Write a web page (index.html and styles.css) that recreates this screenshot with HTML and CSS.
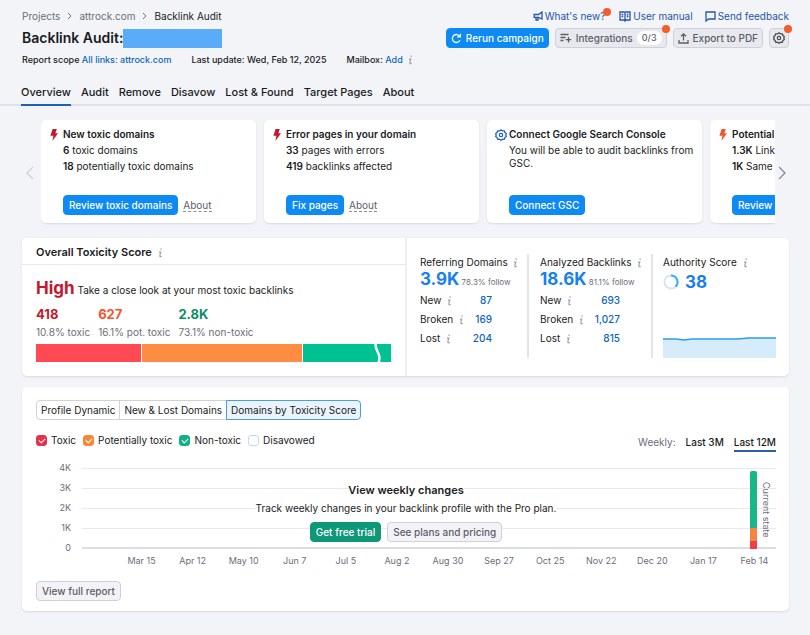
FILE: index.html
```html
<!DOCTYPE html>
<html lang="en">
<head>
	<meta charset="utf-8">
	<title>Backlink Audit</title>
	<meta name="viewport" content="width=device-width, initial-scale=1">
	<link rel="stylesheet" href="styles.css">
</head>
<body>
	<!-- shared icons -->
	<svg class="sprite" aria-hidden="true">
		<symbol id="info" viewBox="0 0 5 10"><path d="M2.400 1.200h1.400M1 4.200h1.800L2 6.500v2.200h1.700" fill="none" stroke="currentColor" stroke-width="1.200"/></symbol>
		<symbol id="bolt" viewBox="0 0 8 12"><path d="M2.6 0h4.2L5.4 4.2H8L2.4 12l1-5.2H.4z" fill="currentColor"/></symbol>
		<symbol id="gear" viewBox="0 0 12 12"><path d="M6 .8l1.5 1.1 1.8-.1.6 1.7 1.4 1.1L10.800 6l.5 1.500-1.400 1.100-.6 1.700-1.800-.1L6 11.300l-1.500-1.100-1.800.1-.6-1.700L.7 7.500 1.200 6 .7 4.600l1.400-1.100.6-1.700 1.800.1z" fill="none" stroke="currentColor" stroke-width="1.300" stroke-linejoin="round"/><circle cx="6" cy="6" r="1.700" fill="none" stroke="currentColor" stroke-width="1.200"/></symbol>
	</svg>

	<header class="header">
		<div class="row">
			<nav class="crumbs">
				<a href="#">Projects</a>
				<svg width="5" height="8" viewBox="0 0 5 8"><path d="M1 1l3 3-3 3"/></svg>
				<a href="#">attrock.com</a>
				<svg width="5" height="8" viewBox="0 0 5 8"><path d="M1 1l3 3-3 3"/></svg>
				<span>Backlink Audit</span>
			</nav>
			<div class="help">
				<a href="#">
					<svg width="10" height="10" viewBox="0 0 10 10"><path d="M9 1v7L5.500 6.300H1.200V3.500h4.300zM3 6.500V9h2V6.500"/></svg>What's new?<i class="dot"></i>
				</a>
				<a href="#">
					<svg width="12" height="11" viewBox="0 0 12 11"><path d="M1 1h4l1 .6L7 1h4v8H7l-1 1-1-1H1zM6 1.500V10M2.600 3.500h1.600M2.600 5.500h1.600M7.800 3.500h1.600M7.800 5.500h1.600"/></svg>User manual
				</a>
				<a href="#">
					<svg width="11" height="11" viewBox="0 0 11 11"><path d="M1 1h9v7H3.500L1 10z"/></svg>Send feedback
				</a>
			</div>
		</div>
		<div class="row title-row">
			<h1>Backlink Audit: <span class="masked"></span></h1>
			<div class="actions">
				<button class="btn primary">
					<svg width="11" height="11" viewBox="0 0 11 11"><path d="M9 7.200A4 4 0 1 1 8.800 3.400M9.400.8v3H6.300"/></svg>Rerun campaign
				</button>
				<button class="btn">
					<svg width="12" height="10" viewBox="0 0 12 10"><path d="M.5 1.500h8M.5 4.500h5M.5 7.500h3M8.500 4v5.500M5.800 6.700h5.400"/></svg>Integrations <span class="count">0/3</span><i class="dot"></i>
				</button>
				<button class="btn">
					<svg width="11" height="11" viewBox="0 0 11 11"><path d="M5.500 7.500V1M3 3.300L5.500.9 8 3.300M1 7v3h9V7"/></svg>Export to PDF
				</button>
				<button class="btn square" aria-label="Settings"><svg class="gear" width="12" height="12"><use href="#gear"/></svg><i class="dot"></i></button>
			</div>
		</div>
		<div class="meta">
			<span>Report scope <a href="#">All links: attrock.com</a></span>
			<span>Last update: Wed, Feb 12, 2025</span>
			<span>Mailbox: <a href="#">Add</a> <svg class="info"><use href="#info"/></svg></span>
		</div>
		<nav class="tabs">
			<a href="#" class="active">Overview</a>
			<a href="#">Audit</a>
			<a href="#">Remove</a>
			<a href="#">Disavow</a>
			<a href="#">Lost &amp; Found</a>
			<a href="#">Target Pages</a>
			<a href="#">About</a>
		</nav>
	</header>

	<main>
		<section class="carousel">
			<button class="arrow off" aria-label="Previous"><svg width="8" height="14" viewBox="0 0 8 14"><path d="M7 1L1 7l6 6"/></svg></button>
			<div class="cards">
				<article class="card">
					<svg class="mark red" width="8" height="12"><use href="#bolt"/></svg>
					<h2>New toxic domains</h2>
					<p><b>6</b> toxic domains</p>
					<p><b>18</b> potentially toxic domains</p>
					<div class="foot"><button class="btn primary">Review toxic domains</button><a href="#">About</a></div>
				</article>
				<article class="card">
					<svg class="mark red" width="8" height="12"><use href="#bolt"/></svg>
					<h2>Error pages in your domain</h2>
					<p><b>33</b> pages with errors</p>
					<p><b>419</b> backlinks affected</p>
					<div class="foot"><button class="btn primary">Fix pages</button><a href="#">About</a></div>
				</article>
				<article class="card">
					<svg class="mark blue" width="12" height="12"><use href="#gear"/></svg>
					<h2>Connect Google Search Console</h2>
					<p class="long">You will be able to audit backlinks from GSC.</p>
					<div class="foot"><button class="btn primary">Connect GSC</button></div>
				</article>
				<article class="card">
					<svg class="mark orange" width="8" height="12"><use href="#bolt"/></svg>
					<h2>Potential</h2>
					<p><b>1.3K</b> Link</p>
					<p><b>1K</b> Same</p>
					<div class="foot"><button class="btn primary">Review</button></div>
				</article>
			</div>
			<button class="arrow" aria-label="Next"><svg width="8" height="14" viewBox="0 0 8 14"><path d="M1 1l6 6-6 6"/></svg></button>
		</section>

		<section class="panel summary">
			<div class="toxicity">
				<h2>Overall Toxicity Score <svg class="info"><use href="#info"/></svg></h2>
				<div class="score">
					<p class="level"><strong>High</strong> Take a close look at your most toxic backlinks</p>
					<ul class="parts">
						<li><b class="red">418</b>10.8% toxic</li>
						<li><b class="orange">627</b>16.1% pot. toxic</li>
						<li><b class="green">2.8K</b>73.1% non-toxic</li>
					</ul>
					<div class="meter">
						<span class="m-toxic"></span><span class="m-pot"></span><span class="m-non"></span>
						<svg class="break" width="10" height="22" viewBox="0 0 10 22"><path d="M3 0C0 8 10 11 5 22" fill="none" stroke="#fff" stroke-width="2.500"/></svg>
					</div>
				</div>
			</div>
			<div class="stats">
				<div class="stat">
					<h3>Referring Domains <svg class="info"><use href="#info"/></svg></h3>
					<p><strong>3.9K</strong> 78.3% follow</p>
					<table>
						<tr><th>New <svg class="info"><use href="#info"/></svg></th><td><a href="#">87</a></td></tr>
						<tr><th>Broken <svg class="info"><use href="#info"/></svg></th><td><a href="#">169</a></td></tr>
						<tr><th>Lost <svg class="info"><use href="#info"/></svg></th><td><a href="#">204</a></td></tr>
					</table>
				</div>
				<div class="stat wide">
					<h3>Analyzed Backlinks <svg class="info"><use href="#info"/></svg></h3>
					<p><strong>18.6K</strong> 81.1% follow</p>
					<table>
						<tr><th>New <svg class="info"><use href="#info"/></svg></th><td><a href="#">693</a></td></tr>
						<tr><th>Broken <svg class="info"><use href="#info"/></svg></th><td><a href="#">1,027</a></td></tr>
						<tr><th>Lost <svg class="info"><use href="#info"/></svg></th><td><a href="#">815</a></td></tr>
					</table>
				</div>
				<div class="stat authority">
					<h3>Authority Score <svg class="info"><use href="#info"/></svg></h3>
					<p class="ring"><svg width="16" height="16" viewBox="0 0 16 16"><circle cx="8" cy="8" r="6.500" fill="none" stroke="#e0e1e9" stroke-width="2"/><path d="M8 1.500a6.500 6.500 0 0 1 4.500 11.200" fill="none" stroke="#2bb3ff" stroke-width="2"/></svg><strong>38</strong></p>
					<svg class="trend" viewBox="0 0 113 22" preserveAspectRatio="none"><path d="M0 3h13l8 1 8-1h45l8-1h31v20H0z" fill="#d6ecfb"/><path d="M0 3h13l8 1 8-1h45l12-1h27" fill="none" stroke="#2b9fe8" stroke-width="1.500"/></svg>
				</div>
			</div>
		</section>

		<section class="panel report">
			<div class="switch">
				<button>Profile Dynamic</button>
				<button>New &amp; Lost Domains</button>
				<button class="on">Domains by Toxicity Score</button>
			</div>
			<div class="filters">
				<label><input type="checkbox" class="c-red" checked>Toxic</label>
				<label><input type="checkbox" class="c-orange" checked>Potentially toxic</label>
				<label><input type="checkbox" class="c-green" checked>Non-toxic</label>
				<label><input type="checkbox">Disavowed</label>
				<div class="period">
					<span>Weekly:</span>
					<a href="#">Last 3M</a>
					<a href="#" class="active">Last 12M</a>
				</div>
			</div>
			<div class="chart">
				<div class="line"><span>4K</span></div>
				<div class="line"><span>3K</span></div>
				<div class="line"><span>2K</span></div>
				<div class="line"><span>1K</span></div>
				<div class="line base"><span>0</span></div>
				<div class="bar"><i class="b-non"></i><i class="b-pot"></i><i class="b-toxic"></i></div>
				<span class="current">Current state</span>
				<div class="promo">
					<h2>View weekly changes</h2>
					<p>Track weekly changes in your backlink profile with the Pro plan.</p>
					<div><button class="btn success">Get free trial</button><button class="btn light">See plans and pricing</button></div>
				</div>
			</div>
			<div class="dates">
				<span>Mar 15</span><span>Apr 12</span><span>May 10</span><span>Jun 7</span><span>Jul 5</span><span>Aug 2</span><span>Aug 30</span><span>Sep 27</span><span>Oct 25</span><span>Nov 22</span><span>Dec 20</span><span>Jan 17</span><span>Feb 14</span>
			</div>
			<button class="btn light">View full report</button>
		</section>
	</main>
</body>
</html>
```

FILE: styles.css
```css
* { margin: 0; padding: 0; box-sizing: border-box; }
body { background: #f3f4f8; color: #191b23; font: 10px/16px Inter, "Liberation Sans", sans-serif; }
a { color: #0b65be; text-decoration: none; }
button { font: inherit; color: inherit; cursor: pointer; }
h1, h2, h3 { font-size: 10px; font-weight: 600; }
.sprite { position: absolute; width: 0; height: 0; }
.info { width: 5px; height: 10px; margin-left: 3px; color: #9ea1ae; vertical-align: -2px; }
.red { color: #c5162c; }
.orange { color: #f4552b; }
.green { color: #0b8d68; }
.blue { color: #1d5fc2; }

/* header */
.header { padding: 8px 21px 0 22px; border-bottom: 2px solid #dfe1e8; }
.row { display: flex; justify-content: space-between; align-items: center; }
.row svg { fill: none; stroke: currentColor; stroke-width: 1.3; }
.crumbs, .help, .actions { display: flex; align-items: center; }
.crumbs { gap: 7px; color: #191b23; }
.crumbs a, .crumbs svg { color: #6c6e79; }
.crumbs svg { stroke-width: 1; }
.help { gap: 12px; }
.help a { position: relative; display: flex; align-items: center; gap: 2px; color: #2456a6; }
.dot { position: absolute; top: -4px; right: -4px; width: 8px; height: 8px; border-radius: 50%; background: #f65c2c; }
.help .dot { top: 0; }
.title-row { margin-top: 4px; }
h1 { display: flex; align-items: center; font-size: 14px; line-height: 20px; }
.masked { width: 99px; height: 19px; background: #5aacf8; }
.actions { gap: 6px; }
.btn { position: relative; display: inline-flex; align-items: center; justify-content: center; gap: 4px; height: 20px; padding: 0 5px; border: 1px solid #cfd1da; border-radius: 4px; background: #e8e9ee; color: #5b5d68; font-weight: 500; white-space: nowrap; }
.actions .btn { padding: 0 4px; }
.btn.primary { border-color: #0e8af5; background: #0e8af5; color: #fff; }
.btn.success { border-color: #0f9878; background: #0f9878; color: #fff; }
.btn.light { background: #f3f3f7; }
.actions .square { width: 20px; padding: 0; }
.square .gear { color: #484a54; }
.count { padding: 0 5px; border-radius: 7px; background: #fff; font-size: 9px; line-height: 14px; }
.meta { display: flex; gap: 20px; margin-top: 4px; font-size: 9px; font-weight: 500; }
.tabs { display: flex; gap: 10px; margin: 12px 0 -2px -1px; font-size: 11px; font-weight: 500; }
.tabs a { padding: 4px 0 4px; border-bottom: 2px solid transparent; color: #191b23; }
.tabs .active { border-color: #1f5fb4; }

main { padding: 14px 21px 24px 22px; }

/* recommendations */
.carousel { display: flex; align-items: center; }
.arrow { flex: none; width: 14px; height: 30px; border: 0; background: none; color: #868894; }
.arrow.off { width: 19px; padding-right: 3px; color: #cfd1d9; }
.arrow svg { display: block; margin: auto; fill: none; stroke: currentColor; stroke-width: 1.3; }
.cards { display: flex; flex: 1; gap: 8px; min-width: 0; overflow: hidden; padding-bottom: 2px; }
.card { position: relative; display: flex; flex: none; flex-direction: column; width: 215px; height: 103px; padding: 6px 6px 8px 22px; border-radius: 5px; background: #fff; box-shadow: 0 1px 2px #d8dae2; }
.mark { position: absolute; top: 9px; left: 9px; }
.mark.blue { left: 8px; }
.card b { font-weight: 600; }
.card p.long { padding-top: 2px; line-height: 13px; }
.foot { display: flex; align-items: center; gap: 5px; margin-top: auto; }
.foot a { border-bottom: 1px dashed #8a8c97; color: #5b5d68; line-height: 12px; }

/* panels */
.panel { border-radius: 5px; background: #fff; box-shadow: 0 1px 2px #d8dae2; }
.summary { display: flex; margin-top: 13px; }
.toxicity { flex: 1; border-right: 2px solid #eceef2; }
.toxicity h2 { padding: 6px 14px 4px; border-bottom: 1px solid #e6e7ed; font-size: 11px; }
.score { padding: 13px 14px 14px; }
.level strong { color: #c5162c; font-size: 17px; line-height: 20px; }
.parts { display: flex; gap: 8px; margin-top: 6px; list-style: none; color: #6c6e79; }
.parts b { display: block; font-size: 13px; line-height: 20px; }
.meter { position: relative; display: flex; gap: 1px; height: 18px; margin-top: 4px; }
.m-toxic { flex: 106; background: #ff4953; }
.m-pot { flex: 160; background: #ff8c43; }
.m-non { flex: 89; background: #00c192; }
.break { position: absolute; top: -2px; right: 8px; }
.stats { display: flex; padding: 16px 13px 18px; }
.stat { width: 109px; margin-right: 11px; border-right: 2px solid #e3e4ea; }
.stat.wide { width: 113px; margin-right: 10px; }
.stat.authority { display: flex; flex-direction: column; width: 113px; margin: 0; border: 0; }
.stat h3 { font-weight: 400; white-space: nowrap; }
.stat p { height: 20px; color: #6c6e79; font-size: 8px; line-height: 18px; white-space: nowrap; }
.stat strong { color: #1680ee; font-size: 17px; }
.stat .ring { display: flex; align-items: center; gap: 6px; margin-top: 2px; }
.trend { width: 100%; height: 22px; margin-top: auto; }
.stat table { width: 72px; border-collapse: collapse; }
.wide table { width: 80px; }
.stat th { height: 19px; font-weight: 400; text-align: left; white-space: nowrap; }
.stat td { font-weight: 500; text-align: right; }

/* report */
.report { margin-top: 11px; padding: 13px 13px 10px 14px; }
.switch { display: flex; }
.switch button { height: 20px; margin-right: -1px; padding: 0 4px; border: 1px solid #d0d2da; background: #fff; }
.switch button:first-child { border-radius: 4px 0 0 4px; }
.switch .on { border-color: #4d9be0; border-radius: 0 4px 4px 0; background: #eaf4fe; }
.filters { display: flex; align-items: flex-start; gap: 7px; margin-top: 12px; }
.filters label { display: flex; align-items: center; gap: 4px; }
.filters input { display: flex; align-items: center; justify-content: center; width: 11px; height: 11px; appearance: none; border: 1px solid #b9dcf3; border-radius: 3px; background: #fff; }
.filters input:checked::before { content: ""; width: 5px; height: 3px; margin-bottom: 1px; border: solid #fff; border-width: 0 0 1px 1px; transform: rotate(-45deg); }
.filters .c-red { border-color: #e8304c; background: #e8304c; }
.filters .c-orange { border-color: #f5883a; background: #f5883a; }
.filters .c-green { border-color: #12b084; background: #12b084; }
.period { display: flex; gap: 10px; margin: 2px 0 0 auto; }
.period span { color: #6c6e79; }
.period a { border-bottom: 2px solid transparent; color: #191b23; font-weight: 500; }
.period .active { border-color: #2c5fae; }
.chart { position: relative; margin-top: 6px; }
.line { display: flex; align-items: center; gap: 11px; height: 20px; color: #6c6e79; font-size: 9px; }
.line span { width: 35px; text-align: right; }
.line::after { content: ""; flex: 1; height: 1px; background: #e8e9ee; }
.base::after { height: 2px; background: #dcdde3; }
.bar { position: absolute; top: 13px; right: 19px; display: flex; flex-direction: column; width: 7px; height: 78px; border-radius: 2px 2px 0 0; overflow: hidden; }
.b-non { flex: 57; background: #18b787; }
.b-pot { flex: 13; background: #f58440; }
.b-toxic { flex: 8; background: #f03d48; }
.current { position: absolute; top: 24px; right: 4px; color: #6c6e79; font-size: 9px; line-height: 12px; writing-mode: vertical-rl; }
.promo { position: absolute; top: 24px; right: 0; left: 0; display: flex; flex-direction: column; align-items: center; }
.promo h2 { background: #fff; font-size: 11px; }
.promo p { margin: 2px 0 6px; background: #fff; }
.promo div { display: flex; gap: 6px; }
.dates { display: grid; grid-template-columns: repeat(13, 1fr); margin: -5px -4px 12px 80px; color: #6c6e79; font-size: 9px; text-align: center; }
```
